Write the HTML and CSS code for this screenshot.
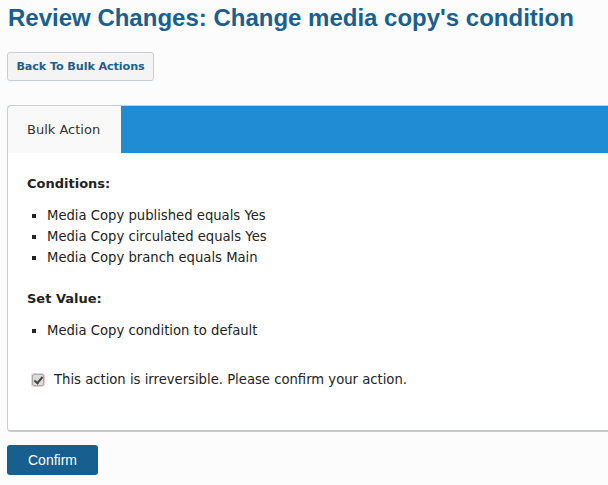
FILE: index.html
```html
<!DOCTYPE html>
<html>
<head>
<meta charset="utf-8">
<link rel="stylesheet" href="styles.css">
</head>
<body>
<h1 class="title">Review Changes: Change media copy's condition</h1>
<div class="toolbar"><button class="btn-back" type="button">Back To Bulk Actions</button></div>
<div class="panel">
  <div class="tabbar">
    <div class="tab">Bulk Action</div>
  </div>
  <div class="panel-body">
    <h3 class="section-title">Conditions:</h3>
    <ul class="list">
      <li>Media Copy published equals Yes</li>
      <li>Media Copy circulated equals Yes</li>
      <li>Media Copy branch equals Main</li>
    </ul>
    <h3 class="section-title">Set Value:</h3>
    <ul class="list">
      <li>Media Copy condition to default</li>
    </ul>
    <label class="confirm-row"><input type="checkbox" class="chk" checked><span>This action is irreversible. Please confirm your action.</span></label>
  </div>
</div>
<div class="actions"><button class="btn-confirm" type="button">Confirm</button></div>
</body>
</html>
```
FILE: styles.css
```css
html, body {
  margin: 0;
  padding: 0;
  background: #fcfcfc;
}
body {
  width: 608px;
  height: 485px;
  overflow: hidden;
  font-family: "DejaVu Sans", Verdana, sans-serif;
  color: #333;
}
.title {
  margin: 0;
  padding: 4px 0 0 8px;
  font-family: "Liberation Sans", Arial, sans-serif;
  font-weight: bold;
  font-size: 24px;
  line-height: 28px;
  color: #1a5f8f;
  white-space: nowrap;
}
.toolbar {
  padding: 20px 0 0 7px;
}
.btn-back {
  box-sizing: border-box;
  height: 29px;
  width: 147px;
  margin: 0;
  padding: 0;
  background: #f4f4f4;
  border: 1px solid #c2cfdb;
  border-radius: 3px;
  font-family: "DejaVu Sans", Verdana, sans-serif;
  font-weight: bold;
  font-size: 11.2px;
  letter-spacing: -0.1px;
  color: #1a5f8f;
}
.panel {
  margin: 24px 0 0 7px;
  width: 620px;
  background: #fff;
  border: 1px solid #cfcfcf;
  border-bottom: 2px solid #c4cad0;
  border-radius: 4px;
  overflow: hidden;
}
.tabbar {
  display: flex;
  height: 47px;
  background: #1f8cd4;
}
.tab {
  width: 113px;
  background: #f9f9f9;
  box-sizing: border-box;
  padding-left: 19px;
  font-size: 13px;
  line-height: 47px;
  color: #333;
}
.panel-body {
  padding: 22px 0 43px 19px;
}
.section-title {
  margin: 0;
  font-size: 13px;
  font-weight: bold;
  line-height: 17px;
  color: #222;
}
.list {
  margin: 13px 0 22px 0;
  padding: 0 0 0 20px;
  list-style: square;
  font-size: 13.2px;
  line-height: 21px;
  color: #222;
}
.list li {
  line-height: 21px;
  height: 21px;
}
.confirm-row {
  display: flex;
  align-items: center;
  gap: 10px;
  padding: 9px 0 0 5px;
  font-size: 13.2px;
  color: #222;
}
.chk {
  appearance: none;
  -webkit-appearance: none;
  position: relative;
  box-sizing: border-box;
  margin: 0;
  width: 12px;
  height: 12px;
  background: #dcdcdc;
  border: 1px solid #a8a8a8;
  border-radius: 2px;
  box-shadow: 0 0 0 1px #f3d0d0;
}
.chk:checked::after {
  content: "";
  position: absolute;
  left: 3px;
  top: 0px;
  width: 3px;
  height: 7px;
  border: solid #444;
  border-width: 0 2px 2px 0;
  transform: rotate(40deg);
}
.actions {
  padding: 13px 0 0 7px;
}
.btn-confirm {
  box-sizing: border-box;
  width: 91px;
  height: 30px;
  margin: 0;
  border: none;
  border-radius: 3px;
  background: #175f8f;
  color: #fff;
  font-family: "Liberation Sans", Arial, sans-serif;
  font-size: 14px;
}
```
